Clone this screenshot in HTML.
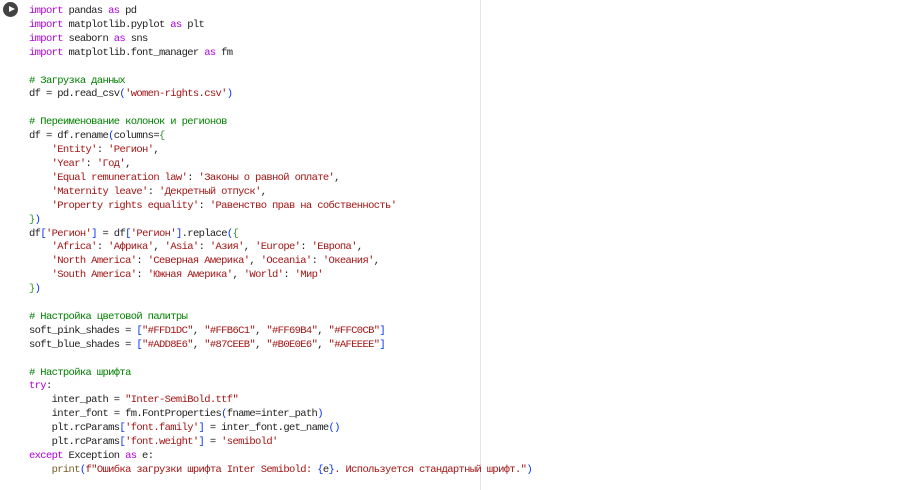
<!DOCTYPE html>
<html><head><meta charset="utf-8"><style>
html,body{margin:0;padding:0;background:#fff;width:900px;height:490px;overflow:hidden}
.run{position:absolute;left:3px;top:2px;width:15px;height:15px;border-radius:50%;background:#424242}
.run:after{content:"";position:absolute;left:5.5px;top:4px;border-left:6px solid #fff;border-top:3.5px solid transparent;border-bottom:3.5px solid transparent}
.div{position:absolute;left:480px;top:0;width:1px;height:490px;background:#e6e6e6}
pre{position:absolute;left:29px;top:5px;margin:0;font-family:"Liberation Mono","DejaVu Sans Mono",monospace;font-size:10.5px;letter-spacing:-0.65px;line-height:13.9px;color:#212121}
.k{color:#af00db}.s{color:#a31515}.c{color:#008000}.b{color:#0431fa}.g{color:#319331}
</style></head><body>
<div class="run"></div><div class="div"></div>
<pre><span class="k">import</span> pandas <span class="k">as</span> pd
<span class="k">import</span> matplotlib.pyplot <span class="k">as</span> plt
<span class="k">import</span> seaborn <span class="k">as</span> sns
<span class="k">import</span> matplotlib.font_manager <span class="k">as</span> fm

<span class="c"># Загрузка данных</span>
df = pd.read_csv<span class="b">(</span><span class="s">'women-rights.csv'</span><span class="b">)</span>

<span class="c"># Переименование колонок и регионов</span>
df = df.rename<span class="b">(</span>columns=<span class="g">{</span>
    <span class="s">'Entity'</span>: <span class="s">'Регион'</span>,
    <span class="s">'Year'</span>: <span class="s">'Год'</span>,
    <span class="s">'Equal remuneration law'</span>: <span class="s">'Законы о равной оплате'</span>,
    <span class="s">'Maternity leave'</span>: <span class="s">'Декретный отпуск'</span>,
    <span class="s">'Property rights equality'</span>: <span class="s">'Равенство прав на собственность'</span>
<span class="g">}</span><span class="b">)</span>
df<span class="b">[</span><span class="s">'Регион'</span><span class="b">]</span> = df<span class="b">[</span><span class="s">'Регион'</span><span class="b">]</span>.replace<span class="b">(</span><span class="g">{</span>
    <span class="s">'Africa'</span>: <span class="s">'Африка'</span>, <span class="s">'Asia'</span>: <span class="s">'Азия'</span>, <span class="s">'Europe'</span>: <span class="s">'Европа'</span>,
    <span class="s">'North America'</span>: <span class="s">'Северная Америка'</span>, <span class="s">'Oceania'</span>: <span class="s">'Океания'</span>,
    <span class="s">'South America'</span>: <span class="s">'Южная Америка'</span>, <span class="s">'World'</span>: <span class="s">'Мир'</span>
<span class="g">}</span><span class="b">)</span>

<span class="c"># Настройка цветовой палитры</span>
soft_pink_shades = <span class="b">[</span><span class="s">"#FFD1DC"</span>, <span class="s">"#FFB6C1"</span>, <span class="s">"#FF69B4"</span>, <span class="s">"#FFC0CB"</span><span class="b">]</span>
soft_blue_shades = <span class="b">[</span><span class="s">"#ADD8E6"</span>, <span class="s">"#87CEEB"</span>, <span class="s">"#B0E0E6"</span>, <span class="s">"#AFEEEE"</span><span class="b">]</span>

<span class="c"># Настройка шрифта</span>
<span class="k">try</span>:
    inter_path = <span class="s">"Inter-SemiBold.ttf"</span>
    inter_font = fm.FontProperties<span class="b">(</span>fname=inter_path<span class="b">)</span>
    plt.rcParams<span class="b">[</span><span class="s">'font.family'</span><span class="b">]</span> = inter_font.get_name<span class="b">()</span>
    plt.rcParams<span class="b">[</span><span class="s">'font.weight'</span><span class="b">]</span> = <span class="s">'semibold'</span>
<span class="k">except</span> Exception <span class="k">as</span> e:
    <span style="color:#795e26">print</span><span class="b">(</span><span class="s">f"Ошибка загрузки шрифта Inter Semibold: </span><span class="b">{</span>e<span class="b">}</span><span class="s">. Используется стандартный шрифт."</span><span class="b">)</span>
</pre>
</body></html>
